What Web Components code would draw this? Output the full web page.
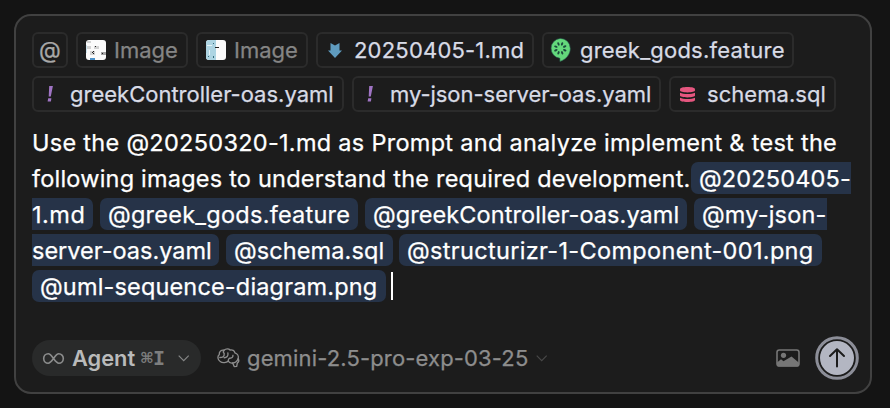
<!DOCTYPE html>
<html lang="en">
<head>
<meta charset="utf-8">
<title>Composer</title>
<style>
html,body{margin:0;background:#141414;height:408px;overflow:hidden;font-family:Inter,"Liberation Sans",sans-serif}
</style>
</head>
<body>
<prompt-composer></prompt-composer>
<script>
const define = (name, markup) => customElements.define(name, class extends HTMLElement {
  connectedCallback() {
    const t = document.createElement('template');
    t.innerHTML = markup;
    this.attachShadow({ mode: 'open' }).append(t.content.cloneNode(true));
  }
});

const petals = [22, 67, 112, 157, 202, 247, 292, 337].map(a => `<ellipse cx="10.300" cy="5.600" rx="1" ry="1.800" transform="rotate(${a} 10.300 10.400)"/>`).join('');
const ICONS = {
  board: '<rect width="20" height="20" rx="3" fill="#fbfbfb"/><g fill="#d3d3d3"><path d="M1 1h4v2H1zM1 6h4v3H1zM8 6h5v3H8zM4 11h5v4H4z"/><path fill="#a5a5a5" d="M15 12h5v3h-5z"/></g><path fill="#222" d="M9 6h1v1H9zM7 11h1v1H7zM6 12h1v1H6zM7 13h1v1H7zM16 13h1v1h-1z"/><path fill="#4c91c9" d="M4 18h5v2H4z"/><path fill="#b9d9e7" d="M0 5h.7v8H0z"/>',
  diagram: '<rect width="20" height="20" rx="3" fill="#fbfbfb"/><path fill="#add4e2" d="M3 0h7v20H3a3 3 0 0 1-3-3V3a3 3 0 0 1 3-3z"/><path fill="#e5f3f6" d="M1 5h5v1H1zM3 10h1v5H3z"/><path fill="#356b78" d="M7 3h1v1H7zM2 16h1v1H2zM7 16h1v2H7z"/><path fill="#222" d="M9 7h4v1H9z"/>',
  arrow: '<path fill="#5f9bbf" d="M2.500 0L7 2.500 11.500 0v7.500H14L7 15 0 7.500h2.500z"/>',
  cucumber: `<path fill="#64d87b" stroke="#285b50" stroke-width=".6" d="M10.300.4a10 10 0 0 1 10 10c0 6-4.300 11.200-10.400 13v-3.100A10 10 0 0 1 10.300.4z"/><g fill="#1b493c">${petals}</g>`,
  bang: '<path fill="#a074c4" d="M2.200 0h3.700L3.800 10.500H1.700zM1.200 12.200h3.200L3.900 15.500H.6z"/>',
  database: '<g fill="#e5567f"><path d="M0 2.200C0 .8 3 0 7.500 0S15 .8 15 2.200v1.300c0 1-3 1.900-7.500 1.900S0 4.500 0 3.500z"/><path d="M0 5.700c1.800 1 4.500 1.200 7.500 1.200S13.200 6.700 15 5.700v2.800c0 1.100-3 1.900-7.500 1.900S0 9.600 0 8.500z"/><path d="M0 10.700c1.800 1 4.500 1.200 7.500 1.200s5.700-.2 7.500-1.200V13c0 1.200-3 2-7.500 2S0 14.200 0 13z"/></g>',
  infinity: '<path fill="none" stroke="#8c8d8d" stroke-width="1.600" d="M10.500 5.500C8.500 2.700 7.300.8 5.200.8a4.500 4.700 0 0 0 0 9.400c2.100 0 3.300-1.900 5.300-4.700s3.200-4.700 5.300-4.700a4.500 4.700 0 0 1 0 9.400c-2.100 0-3.300-1.900-5.300-4.700z"/>',
  chevron: '<path fill="none" stroke="currentColor" stroke-width="1.200" d="M.7.7l5 5 5-5"/>',
  brain: '<g fill="none" stroke="#8d8d8d" stroke-width="1.350" stroke-linecap="round" stroke-linejoin="round"><path d="M3.200 13.500C.5 11.800.2 8.200 2.300 6.500 1.900 3.600 4.500 1.600 7 2.200 8.900.3 11.900.5 13.100 2c2.300-.6 4.400.8 4.800 2.900 2.600.8 3.900 3.400 3.300 5.700.9 1.700.5 3.600-.9 4.500l-.6 3.300-2.500.2-1.500-3.600c-2.300.3-3.800-.5-4.400-1.900-2 1.600-5.800 2.200-8.100.4z"/><path d="M7 2.200c-1 1.200-.8 2.400.2 3.400M2.800 9.500c2.800 0 4.700-.9 4.400-3.900M7.200 9.700c2.500 0 4.300-1.700 3.700-4.700M11.300 13.100c-.2-2 .7-3.100 2.400-3.100 1.600-.2 2.400-1.200 2.200-2.700M15.700 15c2.300-.1 4.400-1.400 5.500-4.400"/></g>',
  picture: '<rect x="1" y="1" width="22" height="16" rx="2.300" fill="none" stroke="#767676" stroke-width="1.600"/><circle cx="7.500" cy="6.300" r="2.600" fill="#767676"/><path fill="#767676" d="M1 13.500l4-3.300 2.500 2.100L15.500 7.500l7.500 6.200V15a2.500 2.500 0 0 1-2.500 2.500h-17A2.500 2.500 0 0 1 1 15z"/>',
  send: '<circle cx="22" cy="22" r="20.300" fill="none" stroke="#8c8e98" stroke-width="3"/><circle cx="22" cy="22" r="17" fill="#b3b6c2"/><path fill="none" stroke="#1c1c1c" stroke-width="2" stroke-linecap="round" stroke-linejoin="round" d="M22 30.500V13.500M15 20l7-6.800 7 6.800"/>'
};
customElements.define('ui-icon', class extends HTMLElement {
  connectedCallback() {
    const [w, h] = this.getAttribute('size').split(' ');
    this.attachShadow({ mode: 'open' }).innerHTML =
      `<style>:host{display:block;flex:none}svg{display:block;overflow:visible}</style><svg width="${w}" height="${h}" viewBox="0 0 ${w} ${h}">${ICONS[this.getAttribute('name')]}</svg>`;
  }
});

define('context-chip', `<style>
:host{display:flex;align-items:center;box-sizing:border-box;flex:none;height:36px;border:2px solid #2b2b2b;border-radius:6px;font-size:22px;line-height:32px;color:#d8dbe6;white-space:nowrap;-webkit-text-stroke:.25px currentColor}
:host([muted]){color:#858585}
.icon{display:flex;flex:none;align-items:center;justify-content:flex-start;box-sizing:border-box;width:var(--text,36px);padding-left:var(--icon,8px)}
</style><span class="icon"><slot name="icon"></slot></span><slot></slot>`);

define('file-mention', `<style>
:host{display:block;box-sizing:border-box;flex:none;height:32px;line-height:34px;padding-left:8px;border-radius:7px;background:#263348}
:host([part-of="start"]){border-radius:7px 0 0 7px}
:host([part-of="end"]){border-radius:0 7px 7px 0;padding-left:0}
</style><slot></slot>`);

define('text-line', `<style>
:host{display:flex;align-items:flex-start;box-sizing:border-box;height:36px;padding-top:2px;line-height:34px;white-space:nowrap}
</style><slot></slot>`);

define('mode-picker', `<style>
:host{display:flex;align-items:center;box-sizing:border-box;flex:none;width:169px;height:36px;border-radius:18px;background:#292a2a;padding-left:11px;color:#b9baba}
b{font-size:21.800px;font-weight:600;margin-left:8px;width:69px}
kbd{font:600 20px "DejaVu Sans Mono","DejaVu Sans",monospace;color:#7d7e7e;width:37px}
ui-icon:last-child{color:#858686}
</style><ui-icon name="infinity" size="21 11"></ui-icon><b>Agent</b><kbd>⌘I</kbd><ui-icon name="chevron" size="12 7"></ui-icon>`);

define('model-picker', `<style>
:host{display:flex;align-items:center;flex:none;margin-left:16px;color:#8d8d8d;font-size:22px;letter-spacing:.15px;-webkit-text-stroke:.25px currentColor}
span{margin-left:7px;width:289px}
ui-icon:last-child{color:#484848}
</style><ui-icon name="brain" size="23 20"></ui-icon><span>gemini-2.5-pro-exp-03-25</span><ui-icon name="chevron" size="12 7"></ui-icon>`);

define('prompt-composer', `<style>
:host{display:block;padding:14px 18px 14px 14px}
.card{box-sizing:border-box;width:858px;height:380px;border:2px solid #414141;border-radius:17px;background:#1c1c1c;padding:16px;display:flex;flex-direction:column}
.chips{display:flex;gap:8px;height:36px;margin-bottom:8px}
.text{color:#fff;font-size:23.500px;margin-top:4px;-webkit-text-stroke:.25px currentColor}
.caret{width:2px;height:28px;background:#fff;margin:2px 0 0 5px}
.bar{display:flex;align-items:center;height:44px;margin-top:32px}
.end{display:flex;align-items:center;gap:15px;margin-left:auto;margin-right:-5px}
.at{font-size:22.500px;margin-top:-1px}
</style>
<div class="card">
<div class="chips">
<context-chip muted style="width:36px;--text:32px;--icon:5px;color:#a8a8a8"><span class="at" slot="icon">@</span></context-chip>
<context-chip muted style="width:112px"><ui-icon slot="icon" name="board" size="20 20"></ui-icon>Image</context-chip>
<context-chip muted style="width:112px"><ui-icon slot="icon" name="diagram" size="20 20"></ui-icon>Image</context-chip>
<context-chip style="width:218px;--icon:10px;letter-spacing:.2px"><ui-icon slot="icon" name="arrow" size="14 15"></ui-icon>20250405-1.md</context-chip>
<context-chip style="width:252px;--icon:6px;letter-spacing:.2px"><ui-icon slot="icon" name="cucumber" size="21 24"></ui-icon>greek_gods.feature</context-chip>
</div>
<div class="chips">
<context-chip style="width:312px;--icon:13px"><ui-icon slot="icon" name="bang" size="7 16"></ui-icon>greekController-oas.yaml</context-chip>
<context-chip style="width:309px;--icon:13px;letter-spacing:-.03px"><ui-icon slot="icon" name="bang" size="7 16"></ui-icon>my-json-server-oas.yaml</context-chip>
<context-chip style="width:167px;--icon:9px;letter-spacing:.05px"><ui-icon slot="icon" name="database" size="15 15"></ui-icon>schema.sql</context-chip>
</div>
<div class="text">
<text-line style="letter-spacing:.285px">Use the @20250320-1.md as Prompt and analyze implement &amp; test the</text-line>
<text-line><span style="width:659px;letter-spacing:.21px">following images to understand the required development.</span><file-mention part-of="start" style="width:160px;letter-spacing:.15px">@20250405-</file-mention></text-line>
<text-line style="gap:7px"><file-mention part-of="end" style="width:61px;letter-spacing:.5px">1.md</file-mention><file-mention style="width:258px;letter-spacing:.25px">@greek_gods.feature</file-mention><file-mention style="width:322px;letter-spacing:.08px">@greekController-oas.yaml</file-mention><file-mention part-of="start" style="width:133px;letter-spacing:.17px">@my-json-</file-mention></text-line>
<text-line><file-mention part-of="end" style="width:187px">server-oas.yaml</file-mention><file-mention style="width:167px;margin-left:7px;letter-spacing:.1px">@schema.sql</file-mention><file-mention style="width:423px;margin-left:6px;letter-spacing:.33px">@structurizr-1-Component-001.png</file-mention></text-line>
<text-line><file-mention style="width:354px;letter-spacing:.16px">@uml-sequence-diagram.png</file-mention><span class="caret"></span></text-line>
</div>
<div class="bar">
<mode-picker></mode-picker><model-picker></model-picker>
<div class="end"><ui-icon name="picture" size="24 18"></ui-icon><ui-icon name="send" size="44 44"></ui-icon></div>
</div>
</div>`);
</script>
</body>
</html>
